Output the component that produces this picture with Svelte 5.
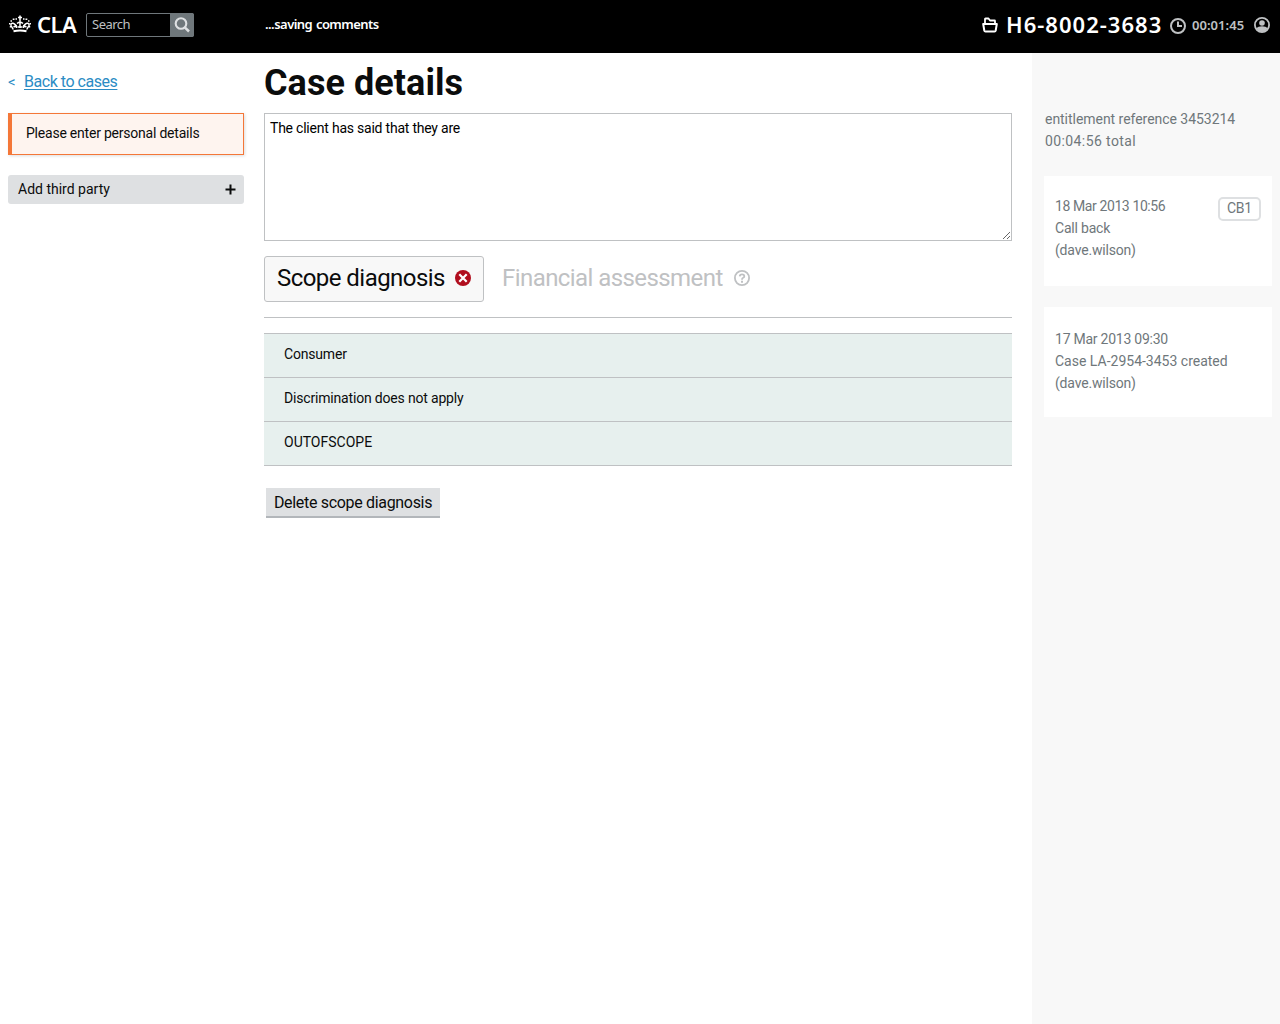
<script>
  const diagnosis = ['Consumer', 'Discrimination does not apply', 'OUTOFSCOPE'];
  const events = [
    { time: '18 Mar 2013 10:56', text: 'Call back', user: '(dave.wilson)', badge: 'CB1' },
    { time: '17 Mar 2013 09:30', text: 'Case LA-2954-3453 created', user: '(dave.wilson)' }
  ];
  let notes = 'The client has said that they are';
</script>

<header>
  <div class="brand">
    <svg class="crown" width="22" height="18" viewBox="0 0 22 18" fill="none" stroke="#fff">
      <path d="M4.500 16.300 Q11 14.800 17.500 16.300" stroke-width="2" />
      <path d="M4.300 14.500 L2 10.500 Q1.500 8 4 8.200 Q7 9 7.500 13 M17.700 14.500 L20 10.500 Q20.500 8 18 8.200 Q15 9 14.500 13" stroke-width="1.500" />
      <path d="M11 5 V13 M8 8.500 Q11 6 14 8.500 M4.500 12 L8 10.500 M17.500 12 L14 10.500 M8.500 12 H13.500" stroke-width="1.500" />
      <path d="M11 .5 V5 M9 2.500 H13" stroke-width="1.600" />
      <path d="M3.700 4.200 H5.500 M6.500 4 H8 M14 4 H15.500 M16.500 4.200 H18.300 M1.500 6 H3 M19 6 H20.500 M0 8.800 H1.500 M20.500 8.800 H22 M.8 11.700 H2.300 M19.700 11.700 H21.200" stroke-width="1.600" />
    </svg>
    <span class="name">CLA</span>
    <form class="search">
      <span class="field">Search</span>
      <span class="go">
        <svg width="24" height="24" viewBox="0 0 24 24" fill="none" stroke="#dee0e2" stroke-width="2.100">
          <circle cx="11" cy="10.500" r="5.300" />
          <path d="M14.800 14.300 L19 18.500" stroke-width="2.500" />
        </svg>
      </span>
    </form>
  </div>
  <div class="status">...saving comments</div>
  <div class="session">
    <svg class="folder" width="16" height="16" viewBox="0 0 16 16" fill="none" stroke="#fff" stroke-width="2" stroke-linejoin="round">
      <path d="M3 7 V2 Q3 1.500 3.500 1.500 H6.500 L8 3.500 H12.500 Q13 3.500 13 4 V7" stroke-width="1.800" />
      <path d="M1.200 7 H14.800 L13.700 13.500 Q13.500 14.500 12.500 14.500 H3.500 Q2.500 14.500 2.300 13.500 Z" />
    </svg>
    <span class="ref">H6-8002-3683</span>
    <svg class="clock" width="16" height="16" viewBox="0 0 16 16" fill="none" stroke="#bfc1c3" stroke-width="2">
      <circle cx="8" cy="8" r="7" />
      <path d="M8 3.500 V9 M8 8 H12" />
    </svg>
    <span class="timer">00:01:45</span>
    <svg class="user" width="16" height="16" viewBox="0 0 16 16">
      <circle cx="8" cy="8" r="7.100" fill="none" stroke="#bfc1c3" stroke-width="1.800" />
      <circle cx="8" cy="6" r="2.800" fill="#bfc1c3" />
      <path d="M2.500 11 Q4 9.300 8 9.300 Q12 9.300 13.500 11 Q12.500 15 8 15 Q3.500 15 2.500 11Z" fill="#bfc1c3" />
    </svg>
  </div>
</header>

<div class="page">
  <aside class="left">
    <div class="back"><span class="lt">&lt;</span><a href="#cases">Back to cases</a></div>
    <div class="notice">Please enter personal details</div>
    <div class="add">
      <span>Add third party</span>
      <svg width="11" height="11" viewBox="0 0 11 11" stroke="#0b0c0c" stroke-width="2"><path d="M5.500 .5 V10.500 M.5 5.500 H10.500" /></svg>
    </div>
  </aside>

  <main>
    <h1>Case details</h1>
    <textarea bind:value={notes} spellcheck="false"></textarea>
    <nav>
      <div class="tab active">
        <span>Scope diagnosis</span>
        <svg width="16" height="16" viewBox="0 0 16 16">
          <circle cx="8" cy="8" r="8" fill="#b10e1e" />
          <path d="M4.300 4.300 L11.700 11.700 M11.700 4.300 L4.300 11.700" stroke="#fff" stroke-width="2.200" />
        </svg>
      </div>
      <div class="tab">
        <span class="fin">Financial assessment</span>
        <svg width="16" height="16" viewBox="0 0 16 16" fill="none" stroke="#bfc1c3">
          <circle cx="8" cy="8" r="7.100" stroke-width="1.800" />
          <path d="M5.700 6.300 Q5.900 4.300 8 4.300 Q10.300 4.300 10.300 6.200 Q10.300 7.200 9.100 7.800 Q8 8.300 8 9.700" stroke-width="1.800" />
          <path d="M8 10.800 V12.700" stroke-width="2" />
        </svg>
      </div>
    </nav>
    <ul>
      {#each diagnosis as item, i}
        <li class="d{i}">{item}</li>
      {/each}
    </ul>
    <button class="delete">Delete scope diagnosis</button>
  </main>

  <aside class="right">
    <div class="summary">
      <div class="ent">entitlement reference 3453214</div>
      <div class="total">00:04:56 total</div>
    </div>
    {#each events as e}
      <section>
        <div class="lines">
          <div class="time">{e.time}</div>
          <div class="text">{e.text}</div>
          <div class="by">{e.user}</div>
        </div>
        {#if e.badge}<span class="badge">{e.badge}</span>{/if}
      </section>
    {/each}
  </aside>
</div>

<style>
  :global(body) { background: #fff; }
  header, .page { font-family: Roboto, 'Noto Sans', sans-serif; color: #0b0c0c; box-sizing: border-box; }
  svg { display: block; flex: none; }
  header {
    height: 53px; background: #000; color: #fff; display: grid;
    grid-template-columns: 256px 1fr auto; font-family: 'Noto Sans', sans-serif;
    padding: 0 10px 0 9px; white-space: nowrap;
  }
  .brand, .session { display: flex; height: 50px; align-items: center; }
  .crown { margin-top: -3px; }
  .name { font-size: 22px; font-weight: 600; margin-left: 6px; width: 49px; line-height: 48px; height: 50px; letter-spacing: -.5px; }
  .search { display: flex; box-sizing: border-box; width: 108px; height: 24px; border: 1px solid #6f777b; border-radius: 2px; }
  .field { flex: 1; padding-left: 5px; font-size: 13px; line-height: 21px; color: #bfc1c3; letter-spacing: -.5px; }
  .go { width: 24px; background: #6f777b; overflow: hidden; margin: -1px; height: 24px; border-radius: 0 2px 2px 0; }
  .status { font-size: 13px; font-weight: 600; line-height: 49px; letter-spacing: -.53px; word-spacing: .8px; }
  .ref { font-size: 22px; font-weight: 600; width: 164px; margin-left: 8px; line-height: 48px; height: 50px; letter-spacing: 1.03px; }
  .clock { margin-top: 2px; }
  .timer { color: #bfc1c3; font-size: 13px; font-weight: 600; width: 62px; margin-left: 6px; line-height: 50px; letter-spacing: .05px; }
  .page { display: grid; grid-template-columns: 236px 748px 248px; column-gap: 20px; padding-left: 8px; height: 971px; font-size: 14px; letter-spacing: -.2px; }
  .back { display: flex; height: 60px; line-height: 58px; font-size: 16px; color: #2b8cc4; }
  .lt { width: 16px; font-size: 15px; }
  a { color: #2b8cc4; text-decoration: underline; text-underline-offset: 2px; letter-spacing: -.46px; }
  .notice {
    box-sizing: border-box; height: 42px; border: 1px solid #f47738; border-left-width: 4px; background: #fef4ef;
    line-height: 39px; padding-left: 14px; box-shadow: 1px 1px 3px #0002; letter-spacing: -.22px;
  }
  .add {
    margin-top: 20px; height: 29px; background: #dee0e2; border-radius: 3px; display: flex;
    align-items: center; justify-content: space-between; padding: 0 8px 0 10px; line-height: 27px; letter-spacing: 0;
  }
  h1 { margin: 0; height: 60px; font-size: 36px; line-height: 60px; font-weight: 700; letter-spacing: .06px; }
  textarea {
    display: block; box-sizing: border-box; width: 748px; height: 128px; border: 1px solid #bfc1c3; margin: 0;
    padding: 4px 5px; font: 14px/20px Roboto, sans-serif; color: #000; outline: 0; border-radius: 0; letter-spacing: -.22px;
  }
  nav { display: flex; padding: 15px 0; border-bottom: 1px solid #bfc1c3; gap: 5px; }
  .tab {
    box-sizing: border-box; height: 46px; border: 1px solid transparent; border-radius: 3px; display: flex; white-space: nowrap;
    align-items: center; justify-content: space-between; padding: 0 12px 2px; font-size: 24px; line-height: 42px; color: #bfc1c3; width: 274px;
    letter-spacing: -.55px;
  }
  .fin { letter-spacing: -.57px; }
  .active { width: 220px; color: #0b0c0c; background: #f8f8f8; border-color: #bfc1c3; }
  ul { list-style: none; margin: 15px 0 0; padding: 0; border-top: 1px solid #bfc1c3; }
  li { height: 43px; border-bottom: 1px solid #bfc1c3; background: #e7f0ee; line-height: 41px; padding-left: 20px; letter-spacing: -.18px; }
  .d2 { letter-spacing: 0; }
  .delete {
    display: block; margin: 22px 0 0 2px; width: 174px; height: 30px; border: 0; border-bottom: 2px solid #b2b6ba;
    background: #dee0e2; font: 16px/28px Roboto, sans-serif; color: #0b0c0c; padding: 1px 0 0; white-space: nowrap; letter-spacing: -.32px;
  }
  .right { background: #f8f8f8; padding: 0 8px 0 12px; color: #6f777b; line-height: 22px; }
  .summary { padding: 55px 0 24px 1px; }
  .ent { letter-spacing: -.04px; }
  .total { letter-spacing: .4px; }
  section { box-sizing: border-box; height: 110px; background: #fff; margin-bottom: 21px; padding: 19px 11px 0; display: flex; justify-content: space-between; }
  section + section { padding-top: 21px; }
  .time { letter-spacing: -.4px; }
  section + section .time { letter-spacing: -.24px; }
  section + section .text { letter-spacing: 0; }
  .by { letter-spacing: -.18px; }
  .badge { box-sizing: border-box; width: 43px; height: 24px; border: 2px solid #dee0e2; border-radius: 5px; text-align: center; line-height: 19px; margin-top: 2px; }
</style>
